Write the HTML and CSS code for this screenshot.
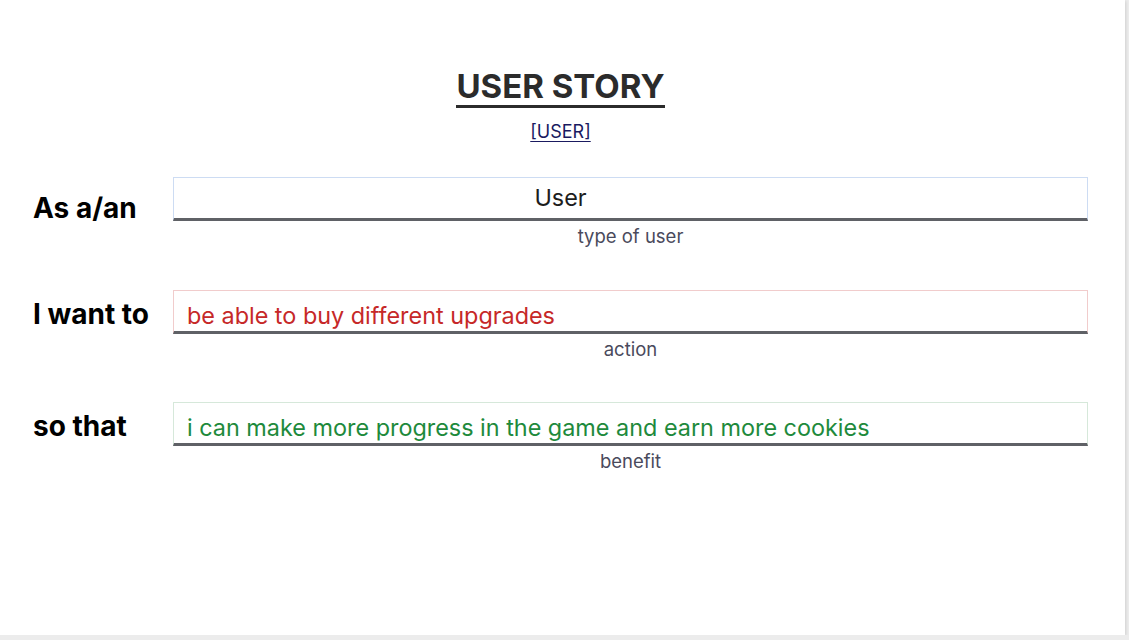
FILE: index.html
```html
<!DOCTYPE html>
<html>
<head>
<meta charset="utf-8">
<link rel="stylesheet" href="styles.css">
</head>
<body>
<div class="card">
  <h1 class="title">USER STORY</h1>
  <div class="sub"><a href="#" class="role-link">[USER]</a></div>
  <div class="rows">
    <div class="row">
      <div class="label label-first">As a/an</div>
      <div class="field">
        <div class="box box-user"><span class="val val-user">User</span></div>
        <div class="caption">type of user</div>
      </div>
    </div>
    <div class="row">
      <div class="label">I want to</div>
      <div class="field">
        <div class="box box-action"><span class="val val-action">be able to buy different upgrades</span></div>
        <div class="caption">action</div>
      </div>
    </div>
    <div class="row">
      <div class="label">so that</div>
      <div class="field">
        <div class="box box-benefit"><span class="val val-benefit">i can make more progress in the game and earn more cookies</span></div>
        <div class="caption">benefit</div>
      </div>
    </div>
  </div>
</div>
</body>
</html>
```
FILE: styles.css
```css
html, body {
  margin: 0;
  padding: 0;
  background: #ececec;
  font-family: Inter, "Noto Sans", sans-serif;
}
.card {
  width: 1125px;
  height: 635px;
  background: #fff;
  box-shadow: 1px 1px 3px rgba(0,0,0,0.12);
  box-sizing: border-box;
  padding-top: 67px;
}
.title {
  margin: 0 auto;
  width: fit-content;
  font-size: 33px;
  font-weight: 700;
  color: #2b2b2b;
  line-height: 38px;
  border-bottom: 3px solid #2b2b2b;
  padding-bottom: 0;
  transform: translateX(-2px);
}
.sub {
  text-align: center;
  margin-top: 13px;
  line-height: 22px;
  padding-right: 4px;
}
.role-link {
  color: #1a1a60;
  font-size: 18px;
  text-decoration-skip-ink: none;
  text-underline-offset: 3px;
}
.rows {
  margin-top: 34px;
  display: flex;
  flex-direction: column;
  gap: 42.5px;
}
.row {
  display: flex;
  align-items: flex-start;
}
.label {
  width: 140px;
  padding-left: 33px;
  font-size: 28px;
  font-weight: 700;
  color: #000;
  padding-top: 8px;
  line-height: 32px;
}
.label-first {
  padding-top: 15px;
}
.field {
  width: 915px;
}
.box {
  height: 44px;
  box-sizing: border-box;
  border: 1px solid #d3def0;
  border-bottom: 3px solid #5f6166;
  display: flex;
  align-items: flex-end;
  padding: 0 13px 1px;
}
.box-user {
  border-color: #cddcf3;
  border-bottom-color: #5f6166;
  justify-content: center;
  padding-right: 153px;
  align-items: center;
  padding-bottom: 0;
}
.box-action {
  border-color: #f1cccc;
  border-bottom-color: #5f6166;
}
.box-benefit {
  border-color: #d6e8da;
  border-bottom-color: #5f6166;
}
.val {
  font-size: 23.4px;
  line-height: 28px;
}
.val-user { color: #1d1d1d; }
.val-action { color: #c62828; }
.val-benefit { color: #1e8a3c; }
.caption {
  text-align: center;
  font-size: 18.5px;
  color: #4a4a5c;
  line-height: 22px;
  margin-top: 4px;
}
```
